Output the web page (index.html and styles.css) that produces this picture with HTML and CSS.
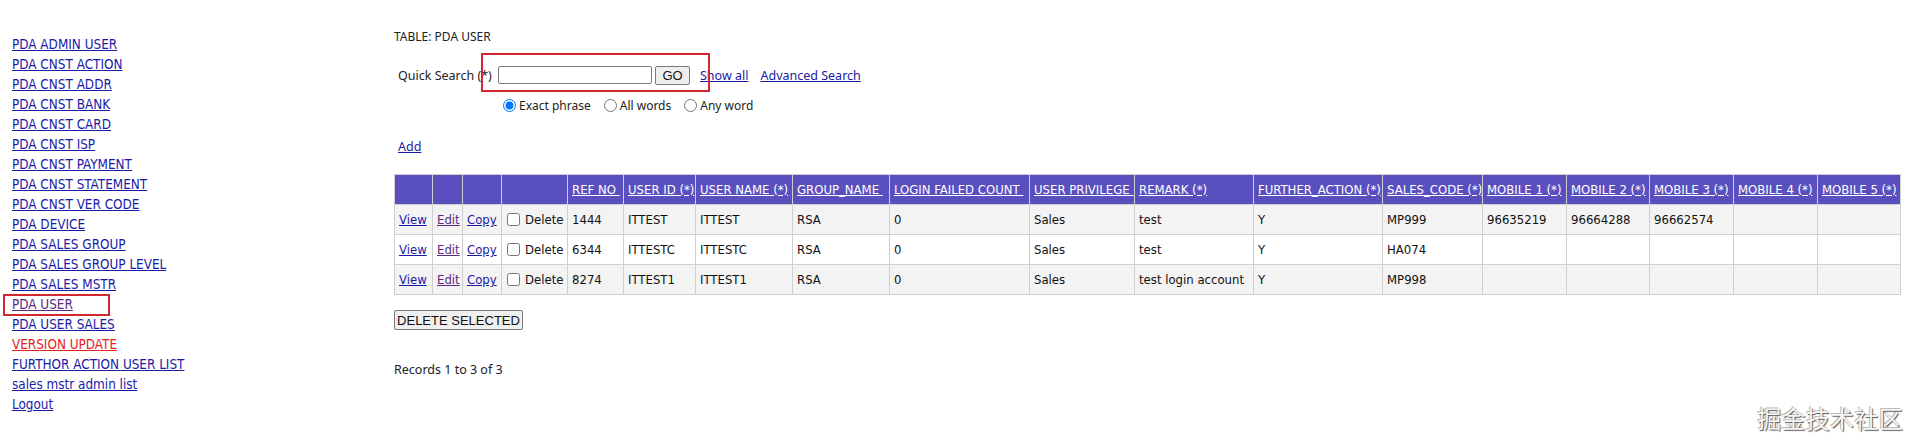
FILE: index.html
```html
<!DOCTYPE html>
<html>
<head>
<meta charset="utf-8">
<title>PDA USER</title>
<link rel="stylesheet" href="styles.css">
</head>
<body>
<div class="page">
  <nav class="nav">
    <a href="#">PDA ADMIN USER</a>
    <a href="#">PDA CNST ACTION</a>
    <a href="#">PDA CNST ADDR</a>
    <a href="#">PDA CNST BANK</a>
    <a href="#">PDA CNST CARD</a>
    <a href="#">PDA CNST ISP</a>
    <a href="#">PDA CNST PAYMENT</a>
    <a href="#">PDA CNST STATEMENT</a>
    <a href="#">PDA CNST VER CODE</a>
    <a href="#">PDA DEVICE</a>
    <a href="#">PDA SALES GROUP</a>
    <a href="#">PDA SALES GROUP LEVEL</a>
    <a href="#">PDA SALES MSTR</a>
    <a href="#" class="visited current">PDA USER<span class="mark mark-nav"></span></a>
    <a href="#">PDA USER SALES</a>
    <a href="#" class="red">VERSION UPDATE</a>
    <a href="#">FURTHOR ACTION USER LIST</a>
    <a href="#">sales mstr admin list</a>
    <a href="#">Logout</a>
  </nav>
  <main class="main">
    <div class="title">TABLE: PDA USER</div>
    <div class="search-row">
      <span class="qs-label">Quick Search (*)</span>
      <input class="qs-input" type="text">
      <button class="go-btn" type="button">GO</button>
      <a href="#" class="show-all">Show all</a>
      <a href="#" class="adv">Advanced Search</a>
      <span class="mark mark-search"></span>
    </div>
    <div class="radio-row">
      <label class="opt"><input type="radio" name="m" checked><span>Exact phrase</span></label>
      <label class="opt"><input type="radio" name="m"><span>All words</span></label>
      <label class="opt"><input type="radio" name="m"><span>Any word</span></label>
    </div>
    <div class="add-row"><a href="#">Add</a></div>
    <table class="grid">
      <colgroup>
        <col class="w38"><col class="w30"><col class="w39"><col class="w66">
        <col class="w56"><col class="w72"><col class="w97"><col class="w97">
        <col class="w140"><col class="w105"><col class="w119"><col class="w129">
        <col class="w100"><col class="w84"><col class="w83"><col class="w84">
        <col class="w84"><col class="w83">
      </colgroup>
      <thead>
        <tr>
          <th></th><th></th><th></th><th></th>
          <th><a href="#">REF NO&nbsp;</a></th>
          <th><a href="#">USER ID (*)</a></th>
          <th><a href="#">USER NAME (*)</a></th>
          <th><a href="#">GROUP_NAME&nbsp;</a></th>
          <th><a href="#">LOGIN FAILED COUNT&nbsp;</a></th>
          <th><a href="#">USER PRIVILEGE&nbsp;</a></th>
          <th><a href="#">REMARK (*)</a></th>
          <th><a href="#">FURTHER_ACTION (*)</a></th>
          <th><a href="#">SALES_CODE (*)</a></th>
          <th><a href="#">MOBILE 1 (*)</a></th>
          <th><a href="#">MOBILE 2 (*)</a></th>
          <th><a href="#">MOBILE 3 (*)</a></th>
          <th><a href="#">MOBILE 4 (*)</a></th>
          <th><a href="#">MOBILE 5 (*)</a></th>
        </tr>
      </thead>
      <tbody>
        <tr class="odd">
          <td><a href="#">View</a></td><td><a href="#" class="visited">Edit</a></td><td><a href="#">Copy</a></td>
          <td><label class="del"><input type="checkbox"><span>Delete</span></label></td>
          <td>1444</td><td>ITTEST</td><td>ITTEST</td><td>RSA</td><td>0</td><td>Sales</td><td>test</td><td>Y</td><td>MP999</td>
          <td>96635219</td><td>96664288</td><td>96662574</td><td></td><td></td>
        </tr>
        <tr>
          <td><a href="#">View</a></td><td><a href="#" class="visited">Edit</a></td><td><a href="#">Copy</a></td>
          <td><label class="del"><input type="checkbox"><span>Delete</span></label></td>
          <td>6344</td><td>ITTESTC</td><td>ITTESTC</td><td>RSA</td><td>0</td><td>Sales</td><td>test</td><td>Y</td><td>HA074</td>
          <td></td><td></td><td></td><td></td><td></td>
        </tr>
        <tr class="odd">
          <td><a href="#">View</a></td><td><a href="#" class="visited">Edit</a></td><td><a href="#">Copy</a></td>
          <td><label class="del"><input type="checkbox"><span>Delete</span></label></td>
          <td>8274</td><td>ITTEST1</td><td>ITTEST1</td><td>RSA</td><td>0</td><td>Sales</td><td>test login account</td><td>Y</td><td>MP998</td>
          <td></td><td></td><td></td><td></td><td></td>
        </tr>
      </tbody>
    </table>
    <div class="actions"><button type="button" class="del-btn">DELETE SELECTED</button></div>
    <div class="records">Records 1 to 3 of 3</div>
  </main>
</div>
<div class="watermark">掘金技术社区</div>
</body>
</html>
```
FILE: styles.css
```css
html, body {
  margin: 0;
  padding: 0;
  background: #fff;
}
body {
  font-family: "DejaVu Sans Condensed", "DejaVu Sans", sans-serif;
  font-size: 13px;
  color: #111;
  position: relative;
  height: 446px;
  overflow: hidden;
}
a { color: #1a1aa6; }
a.visited { color: #5b2a86; }
a.red { color: #e8201c; }

.page {
  display: flex;
  align-items: flex-start;
}

/* left navigation */
.nav {
  width: 382px;
  padding: 35px 0 0 12px;
  display: flex;
  flex-direction: column;
  align-items: flex-start;
  line-height: 20px;
  font-size: 13.4px;
}
.nav a { white-space: nowrap; }
.current { position: relative; }
.mark {
  position: absolute;
  border: 2px solid #d4262e;
  pointer-events: none;
}
.mark-nav {
  left: -9px;
  top: -1px;
  width: 103px;
  height: 18px;
}

/* main content */
.main {
  padding-top: 29px;
  flex: 1;
}
.title {
  font-family: "Noto Sans", "Open Sans", sans-serif;
  font-size: 12px;
  line-height: 16px;
  color: #222;
}
.search-row {
  position: relative;
  display: flex;
  align-items: center;
  height: 20px;
  margin-top: 20px;
  padding-left: 4px;
  font-family: "Noto Sans", "Open Sans", sans-serif;
  font-size: 12.5px;
}
.qs-label {
  width: 100px;
  white-space: nowrap;
  color: #222;
}
.qs-input {
  box-sizing: border-box;
  width: 154px;
  height: 18px;
  margin: 0;
  border: 1px solid #7a7a7a;
  border-radius: 2px;
  padding: 0 2px;
}
.go-btn {
  box-sizing: border-box;
  width: 35px;
  height: 19px;
  margin: 0 0 0 3px;
  padding: 0;
  font-family: "Liberation Sans", Arial, sans-serif;
  font-size: 13px;
  color: #111;
  background: #efefef;
  border: 1px solid #7a7a7a;
  border-radius: 2px;
}
.show-all { margin-left: 10px; }
.adv { margin-left: 12px; }
.mark-search {
  left: 87px;
  top: -12px;
  width: 225px;
  height: 35px;
}
.radio-row {
  display: flex;
  align-items: center;
  height: 18px;
  margin-top: 11px;
  padding-left: 109px;
  gap: 13px;
  font-family: "Noto Sans", "Open Sans", sans-serif;
  font-size: 12px;
  color: #222;
}
.opt {
  display: flex;
  align-items: center;
  gap: 3px;
}
.opt input {
  margin: 0;
  width: 13px;
  height: 13px;
}
.add-row {
  margin-top: 25px;
  padding-left: 4px;
  line-height: 16px;
  font-family: "Noto Sans", "Open Sans", sans-serif;
  font-size: 12.5px;
}

/* data grid */
.grid {
  margin-top: 19px;
  width: 1506px;
  table-layout: fixed;
  border-collapse: collapse;
}
.grid th, .grid td {
  border: 1px solid #cfcfcf;
  height: 29px;
  padding: 0 4px;
  text-align: left;
  font-weight: normal;
  white-space: nowrap;
  overflow: hidden;
}
.grid thead th {
  background: #5a4fbf;
  color: #fff;
}
.grid thead a { color: #fff; }
.grid tbody tr { background: #fff; }
.grid tbody tr.odd { background: #f3f3f3; }
.del {
  display: flex;
  align-items: center;
  gap: 5px;
}
.del input {
  margin: 0 0 0 1px;
  width: 13px;
  height: 13px;
}

.w38 { width: 38px; } .w30 { width: 30px; } .w39 { width: 39px; }
.w66 { width: 66px; } .w56 { width: 56px; } .w72 { width: 72px; }
.w97 { width: 97px; } .w140 { width: 140px; } .w105 { width: 105px; }
.w119 { width: 119px; } .w129 { width: 129px; } .w100 { width: 100px; }
.w84 { width: 84px; } .w83 { width: 83px; }

.actions { margin-top: 15px; }
.del-btn {
  box-sizing: border-box;
  height: 20px;
  width: 129px;
  padding: 0;
  margin: 0;
  font-family: "Liberation Sans", Arial, sans-serif;
  font-size: 13px;
  color: #111;
  background: #efefef;
  border: 1px solid #7a7a7a;
  border-radius: 2px;
}
.records {
  margin-top: 32px;
  line-height: 16px;
  font-family: "Noto Sans", "Open Sans", sans-serif;
  font-size: 12.5px;
  color: #222;
}

.watermark {
  position: absolute;
  right: 17px;
  top: 403px;
  font-family: "Noto Sans CJK SC", sans-serif;
  font-size: 24px;
  line-height: 30px;
  letter-spacing: 0.3px;
  color: #f6f6f6;
  text-shadow: 1px 1px 1px #555, -1px -1px 0 #bbb;
}
```
